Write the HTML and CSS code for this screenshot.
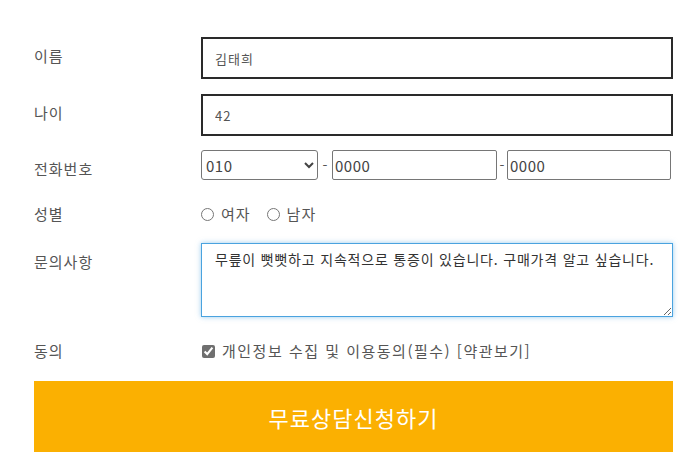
FILE: index.html
```html
<!DOCTYPE html>
<html lang="ko">
<head>
<meta charset="utf-8">
<title>상담신청</title>
<link rel="stylesheet" href="styles.css">
</head>
<body>
<form class="form">
  <div class="row row-name">
    <label class="label">이름</label>
    <div class="field"><input class="text-input" type="text" value="김태희"></div>
  </div>
  <div class="row row-age">
    <label class="label">나이</label>
    <div class="field"><input class="text-input" type="text" value="42"></div>
  </div>
  <div class="row row-phone">
    <label class="label">전화번호</label>
    <div class="field phone">
      <select class="phone-select"><option>010</option><option>011</option></select>
      <span class="dash dash-1">-</span>
      <input class="phone-input" type="text" value="0000">
      <span class="dash dash-2">-</span>
      <input class="phone-input phone-input-last" type="text" value="0000">
    </div>
  </div>
  <div class="row row-gender">
    <label class="label">성별</label>
    <div class="field choice">
      <label class="option"><input type="radio" name="g" class="radio">여자</label>
      <label class="option"><input type="radio" name="g" class="radio">남자</label>
    </div>
  </div>
  <div class="row row-msg">
    <label class="label">문의사항</label>
    <div class="field"><textarea class="textarea">무릎이 뻣뻣하고 지속적으로 통증이 있습니다. 구매가격 알고 싶습니다.</textarea></div>
  </div>
  <div class="row row-agree">
    <label class="label">동의</label>
    <div class="field choice">
      <label class="option agree"><input type="checkbox" class="checkbox" checked>개인정보 수집 및 이용동의(필수) [약관보기]</label>
    </div>
  </div>
  <button type="button" class="submit">무료상담신청하기</button>
</form>
</body>
</html>
```
FILE: styles.css
```css
html, body {
  margin: 0;
  padding: 0;
  background: #fff;
}
body {
  font-family: "Noto Sans CJK KR", "Noto Sans", sans-serif;
  color: #555;
}
.form {
  display: flex;
  flex-direction: column;
  padding: 37px 18px 0 34px;
}
.row {
  display: flex;
  align-items: flex-start;
  margin-bottom: 15px;
}
.row-age { margin-bottom: 14px; }
.row-gender { margin-bottom: 19px; }
.row-agree { margin-bottom: 20px; }
.label {
  flex: none;
  width: 167px;
  padding-top: 9px;
  line-height: 20px;
  font-size: 15px;
  letter-spacing: 1px;
  color: #555;
}
.field {
  flex: 1;
  display: flex;
  align-items: center;
  min-width: 0;
}
.text-input {
  box-sizing: border-box;
  width: 100%;
  height: 42px;
  margin: 0;
  border: 2px solid #2a2a2a;
  border-radius: 0;
  padding: 0 12px;
  font-family: inherit;
  font-size: 13px;
  letter-spacing: 1px;
  color: #555;
  outline: none;
}
.phone {
  height: 30px;
}
.phone-select {
  box-sizing: border-box;
  width: 117px;
  height: 30px;
  margin: 0;
  font-family: inherit;
  font-size: 15px;
  letter-spacing: 0.5px;
  color: #444;
  border: 1px solid #767676;
  border-radius: 3px;
  background: #fff;
}
.dash {
  flex: none;
  text-align: center;
  font-size: 14px;
  color: #555;
}
.dash-1 { width: 14px; }
.dash-2 { width: 10px; }
.phone-input {
  box-sizing: border-box;
  width: 165px;
  height: 30px;
  margin: 0;
  padding: 0 2px;
  border: 1px solid #767676;
  border-radius: 2px;
  font-family: inherit;
  font-size: 15px;
  letter-spacing: 0.5px;
  color: #444;
  outline: none;
}
.phone-input-last { width: 164px; }
.choice {
  padding-top: 9px;
  line-height: 20px;
}
.option {
  display: inline-flex;
  align-items: center;
  font-size: 15px;
  letter-spacing: 1px;
  color: #555;
  margin-right: 16px;
}
.agree {
  letter-spacing: 1.5px;
}
.radio {
  width: 13px;
  height: 13px;
  margin: 0 7px 0 0;
}
.checkbox {
  width: 13px;
  height: 13px;
  margin: 0 7px 0 1px;
  accent-color: #6f6f6f;
}
.textarea {
  box-sizing: border-box;
  width: 100%;
  height: 74px;
  margin: 0;
  padding: 5px 13px;
  border: 1px solid #4aa3df;
  border-radius: 0;
  box-shadow: 0 0 5px rgba(74, 163, 223, 0.55);
  font-family: inherit;
  font-size: 14px;
  letter-spacing: 0.8px;
  line-height: 20px;
  color: #333;
  outline: none;
}
.submit {
  box-sizing: border-box;
  width: 100%;
  height: 71px;
  margin: 0;
  border: 0;
  background: #fbb001;
  color: #fff;
  font-family: inherit;
  font-size: 22px;
  letter-spacing: 1px;
  cursor: pointer;
}
```
